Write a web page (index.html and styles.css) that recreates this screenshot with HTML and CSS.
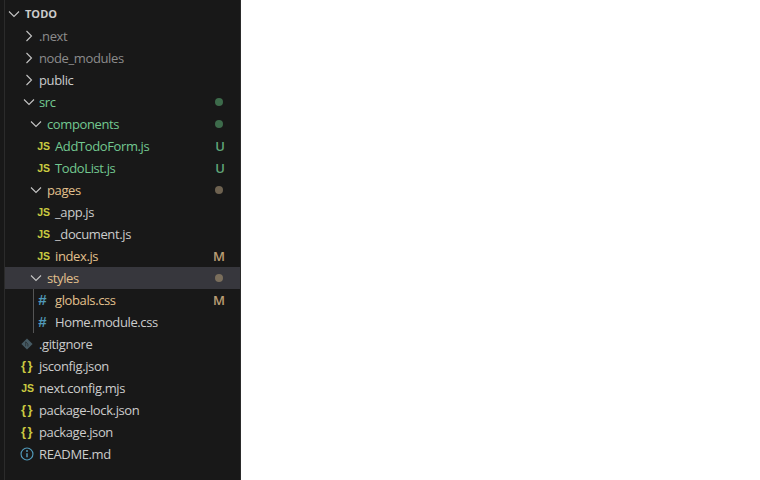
FILE: index.html
```html
<!DOCTYPE html>
<html lang="en">
<head>
<meta charset="utf-8">
<title>Explorer</title>
<link rel="stylesheet" href="styles.css">
</head>
<body>
<div class="app">
  <div class="strip"></div>
  <aside class="sidebar">
    <div class="row root d0"><svg class="chev" viewBox="0 0 16 16"><path d="M3 5.5l5 5 5-5"/></svg><span class="label">TODO</span></div>
    <div class="row d1 ignored"><svg class="chev" viewBox="0 0 16 16"><path d="M5.5 3l5 5-5 5"/></svg><span class="label">.next</span></div>
    <div class="row d1 ignored"><svg class="chev" viewBox="0 0 16 16"><path d="M5.5 3l5 5-5 5"/></svg><span class="label">node_modules</span></div>
    <div class="row d1"><svg class="chev" viewBox="0 0 16 16"><path d="M5.5 3l5 5-5 5"/></svg><span class="label">public</span></div>
    <div class="row d1 added"><svg class="chev" viewBox="0 0 16 16"><path d="M3 5.5l5 5 5-5"/></svg><span class="label">src</span><span class="dot dot-green"></span></div>
    <div class="row d2 added"><svg class="chev" viewBox="0 0 16 16"><path d="M3 5.5l5 5 5-5"/></svg><span class="label">components</span><span class="dot dot-green"></span></div>
    <div class="row d3 added"><span class="icon js">JS</span><span class="label">AddTodoForm.js</span><span class="badge">U</span></div>
    <div class="row d3 added"><span class="icon js">JS</span><span class="label">TodoList.js</span><span class="badge">U</span></div>
    <div class="row d2 modified"><svg class="chev" viewBox="0 0 16 16"><path d="M3 5.5l5 5 5-5"/></svg><span class="label">pages</span><span class="dot dot-brown"></span></div>
    <div class="row d3"><span class="icon js">JS</span><span class="label">_app.js</span></div>
    <div class="row d3"><span class="icon js">JS</span><span class="label">_document.js</span></div>
    <div class="row d3 modified"><span class="icon js">JS</span><span class="label">index.js</span><span class="badge">M</span></div>
    <div class="row d2 modified active"><svg class="chev" viewBox="0 0 16 16"><path d="M3 5.5l5 5 5-5"/></svg><span class="label">styles</span><span class="dot dot-brown"></span></div>
    <div class="guide">
      <div class="row g3 modified"><span class="icon hash">#</span><span class="label">globals.css</span><span class="badge">M</span></div>
      <div class="row g3"><span class="icon hash">#</span><span class="label">Home.module.css</span></div>
    </div>
    <div class="row d1"><svg class="icon-svg" viewBox="0 0 16 16"><path class="git" d="M8 1.6l6.4 6.4-6.4 6.4-6.4-6.4z"/><path class="git-cut" d="M6.5 5.5l2.5 2.5v3M6.5 5.5v5"/></svg><span class="label">.gitignore</span></div>
    <div class="row d1"><span class="icon braces">{}</span><span class="label">jsconfig.json</span></div>
    <div class="row d1"><span class="icon js">JS</span><span class="label">next.config.mjs</span></div>
    <div class="row d1"><span class="icon braces">{}</span><span class="label">package-lock.json</span></div>
    <div class="row d1"><span class="icon braces">{}</span><span class="label">package.json</span></div>
    <div class="row d1"><svg class="icon-svg" viewBox="0 0 16 16"><circle class="info" cx="8" cy="8" r="6.8"/><path class="info info-stem" d="M8 7v4.8"/><circle class="info-dot" cx="8" cy="4.6" r="1.1"/></svg><span class="label">README.md</span></div>
  </aside>
  <main class="editor"></main>
</div>
</body>
</html>
```

FILE: styles.css
```css
* { box-sizing: border-box; }
html, body { margin: 0; height: 100%; }
body { background: #fff; font: 13px/22px "Open Sans", "Noto Sans", sans-serif; }
.app { display: flex; height: 480px; overflow: hidden; }
.strip { width: 5px; background: #181818; border-right: 1px solid #2b2b2b; }
.sidebar { width: 236px; padding-top: 3px; background: #181818; border-right: 1px solid #2b2b2b; color: #cccccc; }
.editor { flex: 1; background: #fff; }

.row { display: flex; align-items: center; height: 22px; padding-right: 15px; white-space: nowrap; }
.row.active { background: #37373d; }
.root { font-weight: 700; font-size: 11px; }
.d0 { padding-left: 1px; }
.d1 { padding-left: 16px; }
.d2 { padding-left: 23px; }
.d3 { padding-left: 32px; }
.g3 { padding-left: 3px; }

.chev { width: 16px; height: 16px; flex: none; margin-right: 2px; fill: none; stroke: #c5c5c5; stroke-width: 1.1; }
.root .chev, .d2 .chev { margin-right: 3px; }
.icon { width: 13px; margin-right: 5px; flex: none; text-align: center; }
.icon-svg { width: 14px; height: 14px; flex: none; margin: 0 5px 0 -1px; }
.label { flex: 1; letter-spacing: -0.38px; }
.root .label { letter-spacing: 0; }

.js { color: #cbcb41; font: 700 10.5px/22px "Liberation Sans", sans-serif; letter-spacing: -0.2px; }
.hash { color: #519aba; font: 700 15px/22px "Liberation Sans", sans-serif; margin-left: -1px; margin-right: 6px; }
.braces { color: #cbcb41; font: 700 13px/22px "Liberation Sans", sans-serif; letter-spacing: 1.5px; }
.git { fill: #465a63; }
.git-cut { fill: none; stroke: #181818; stroke-width: 0.6; }
.info { fill: none; stroke: #519aba; stroke-width: 1.3; }
.info-stem { stroke-width: 1.7; }
.info-dot { fill: #519aba; }

.ignored { color: #8c8c8c; }
.added .label, .added .badge { color: #73c991; }
.modified .label, .modified .badge { color: #e2c08d; }
.badge { font-weight: 600; font-size: 13px; opacity: 0.8; }
.dot { width: 8px; height: 8px; border-radius: 50%; margin-right: 2px; }
.dot-green { background: #3d6b4b; }
.dot-brown { background: #6e6250; }
.active .dot-brown { background: #7a6e5c; }

.guide { margin-left: 28px; border-left: 1px solid #555; }
```
